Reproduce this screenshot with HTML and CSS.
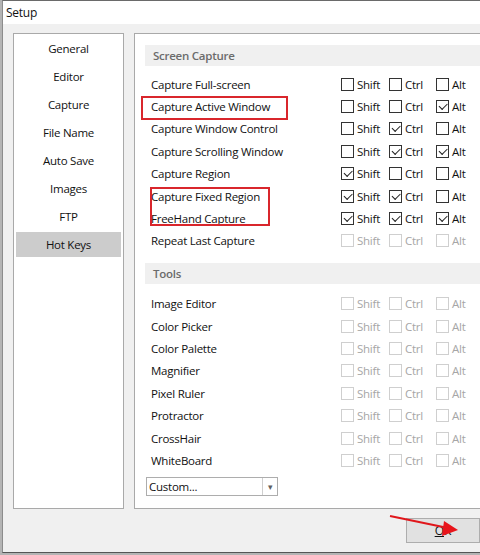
FILE: index.html
```html
<!DOCTYPE html>
<html lang="en">
<head>
    <meta charset="UTF-8">
    <title>Setup</title>
    <link rel="stylesheet" href="styles.css">
</head>
<body>
    <div class="window">
        <div class="titlebar">Setup</div>
        <div class="client">
            <div class="main">
                <ul class="nav">
                    <li>General</li>
                    <li>Editor</li>
                    <li>Capture</li>
                    <li>File Name</li>
                    <li>Auto Save</li>
                    <li>Images</li>
                    <li>FTP</li>
                    <li class="active">Hot Keys</li>
                </ul>

                <div class="panel">
                    <div class="section-head">Screen Capture</div>
                    <div class="rows first">
                        <div class="row"><span class="label">Capture Full-screen</span>
                            <span class="key shift"><i class="box"></i>Shift</span><span class="key ctrl"><i class="box"></i>Ctrl</span><span class="key"><i class="box"></i>Alt</span></div>
                        <div class="row"><span class="label">Capture Active Window</span>
                            <span class="key shift"><i class="box"></i>Shift</span><span class="key ctrl"><i class="box"></i>Ctrl</span><span class="key"><i class="box on"></i>Alt</span></div>
                        <div class="row"><span class="label">Capture Window Control</span>
                            <span class="key shift"><i class="box"></i>Shift</span><span class="key ctrl"><i class="box on"></i>Ctrl</span><span class="key"><i class="box"></i>Alt</span></div>
                        <div class="row"><span class="label">Capture Scrolling Window</span>
                            <span class="key shift"><i class="box"></i>Shift</span><span class="key ctrl"><i class="box on"></i>Ctrl</span><span class="key"><i class="box on"></i>Alt</span></div>
                        <div class="row"><span class="label">Capture Region</span>
                            <span class="key shift"><i class="box on"></i>Shift</span><span class="key ctrl"><i class="box"></i>Ctrl</span><span class="key"><i class="box"></i>Alt</span></div>
                        <div class="row"><span class="label">Capture Fixed Region</span>
                            <span class="key shift"><i class="box on"></i>Shift</span><span class="key ctrl"><i class="box on"></i>Ctrl</span><span class="key"><i class="box"></i>Alt</span></div>
                        <div class="row"><span class="label">FreeHand Capture</span>
                            <span class="key shift"><i class="box on"></i>Shift</span><span class="key ctrl"><i class="box on"></i>Ctrl</span><span class="key"><i class="box on"></i>Alt</span></div>
                        <div class="row off"><span class="label">Repeat Last Capture</span>
                            <span class="key shift"><i class="box"></i>Shift</span><span class="key ctrl"><i class="box"></i>Ctrl</span><span class="key"><i class="box"></i>Alt</span></div>
                    </div>

                    <div class="section-head tools">Tools</div>
                    <div class="rows second">
                        <div class="row off"><span class="label">Image Editor</span>
                            <span class="key shift"><i class="box"></i>Shift</span><span class="key ctrl"><i class="box"></i>Ctrl</span><span class="key"><i class="box"></i>Alt</span></div>
                        <div class="row off"><span class="label">Color Picker</span>
                            <span class="key shift"><i class="box"></i>Shift</span><span class="key ctrl"><i class="box"></i>Ctrl</span><span class="key"><i class="box"></i>Alt</span></div>
                        <div class="row off"><span class="label">Color Palette</span>
                            <span class="key shift"><i class="box"></i>Shift</span><span class="key ctrl"><i class="box"></i>Ctrl</span><span class="key"><i class="box"></i>Alt</span></div>
                        <div class="row off"><span class="label">Magnifier</span>
                            <span class="key shift"><i class="box"></i>Shift</span><span class="key ctrl"><i class="box"></i>Ctrl</span><span class="key"><i class="box"></i>Alt</span></div>
                        <div class="row off"><span class="label">Pixel Ruler</span>
                            <span class="key shift"><i class="box"></i>Shift</span><span class="key ctrl"><i class="box"></i>Ctrl</span><span class="key"><i class="box"></i>Alt</span></div>
                        <div class="row off"><span class="label">Protractor</span>
                            <span class="key shift"><i class="box"></i>Shift</span><span class="key ctrl"><i class="box"></i>Ctrl</span><span class="key"><i class="box"></i>Alt</span></div>
                        <div class="row off"><span class="label">CrossHair</span>
                            <span class="key shift"><i class="box"></i>Shift</span><span class="key ctrl"><i class="box"></i>Ctrl</span><span class="key"><i class="box"></i>Alt</span></div>
                        <div class="row off"><span class="label">WhiteBoard</span>
                            <span class="key shift"><i class="box"></i>Shift</span><span class="key ctrl"><i class="box"></i>Ctrl</span><span class="key"><i class="box"></i>Alt</span></div>
                    </div>

                    <div class="combo">
                        <span class="combo-text">Custom...</span>
                        <span class="combo-btn">&#9662;</span>
                    </div>
                </div>
            </div>

            <div class="buttons">
                <button class="ok"><u>O</u>K</button>
            </div>
        </div>

        <!-- red markup drawn on top of the dialog -->
        <div class="mark mark-active"></div>
        <div class="mark mark-fixed"></div>
        <svg class="arrow" width="90" height="40" viewBox="0 0 90 40">
            <line x1="10" y1="11" x2="68" y2="23" stroke="#e0161b" stroke-width="2"/>
            <polygon points="78,25 64,16 62,31" fill="#e8141a"/>
        </svg>
    </div>
</body>
</html>
```

FILE: styles.css
```css
* {
    box-sizing: border-box;
}
body {
    margin: 0;
    height: 555px;
    overflow: hidden;
    background: #b4b4b4;
    font-family: "Open Sans", "Noto Sans", sans-serif;
    font-size: 11.5px;
    letter-spacing: -0.25px;
    color: #111;
}
.window {
    position: relative;
    margin-left: 2px;
    width: 478px;
    height: 553px;
    background: #f0f0f0;
    border-top: 1px solid #6a6a6a;
    border-left: 1px solid #8c8c8c;
    border-bottom: 1px solid #555;
    display: flex;
    flex-direction: column;
    overflow: hidden;
}
.titlebar {
    height: 23px;
    line-height: 23px;
    padding-left: 3px;
    background: #fff;
    font-size: 12px;
}
.client {
    flex: 1;
    padding: 9px 0 0 10px;
    display: flex;
    flex-direction: column;
}
.main {
    display: flex;
    gap: 10px;
    height: 476px;
}
.nav {
    flex-shrink: 0;
    width: 111px;
    margin: 0;
    padding: 1px;
    list-style: none;
    background: #fff;
    border: 1px solid #a9a9a9;
}
.nav li {
    height: 28px;
    line-height: 26px;
    text-align: center;
    border: 1px solid transparent;
    background-clip: padding-box;
}
.nav li.active {
    background-color: #cccccc;
    border-bottom-width: 2px;
}
.panel {
    flex: 1;
    min-width: 0;
    background: #fff;
    border: 1px solid #a9a9a9;
    border-right: none;
    padding: 11px 0 0 10px;
}
.section-head {
    height: 21px;
    line-height: 21px;
    padding-left: 8px;
    background: #f0f0f0;
    color: #6b6b6b;
    font-weight: 600;
}
.section-head.tools {
    margin-top: 11px;
}
.rows.first {
    margin-top: 7px;
}
.rows.second {
    margin-top: 8.5px;
}
.row {
    height: 22.4px;
    display: flex;
    align-items: center;
    padding-left: 6px;
    white-space: nowrap;
}
.label {
    flex-shrink: 0;
    width: 190px;
}
.key {
    flex-shrink: 0;
    display: flex;
    align-items: center;
    gap: 3px;
    width: 46px;
}
.key.shift {
    width: 48px;
}
.key.ctrl {
    width: 47px;
}
.box {
    position: relative;
    flex-shrink: 0;
    width: 13px;
    height: 13px;
    border: 1px solid #333;
    background: #fff;
}
.box.on::after {
    content: "";
    position: absolute;
    left: 2px;
    top: 2px;
    width: 7px;
    height: 3.5px;
    border-left: 1px solid #222;
    border-bottom: 1px solid #222;
    transform: rotate(-45deg);
}
.row.off .key {
    color: #a6a6a6;
}
.row.off .box {
    border-color: #cfcfcf;
}
.combo {
    margin-top: 5px;
    margin-left: 1px;
    width: 132px;
    height: 19px;
    display: flex;
    border: 1px solid #adadad;
    background: #fff;
}
.combo-text {
    flex: 1;
    line-height: 17px;
    padding-left: 2px;
}
.combo-btn {
    width: 15px;
    border-left: 1px solid #cfcfcf;
    text-align: center;
    line-height: 17px;
    font-size: 9px;
    color: #606060;
}
.buttons {
    display: flex;
    justify-content: flex-end;
    margin-top: 9px;
}
.ok {
    width: 74px;
    height: 25px;
    background: #e1e1e1;
    border: 1px solid #adadad;
    font-family: inherit;
    font-size: 12px;
    color: #111;
}
.mark {
    position: absolute;
    border: 2px solid #d9262c;
}
.mark-active {
    left: 138px;
    top: 95px;
    width: 147px;
    height: 24px;
}
.mark-fixed {
    left: 147px;
    top: 186px;
    width: 120px;
    height: 39px;
}
.arrow {
    position: absolute;
    left: 377px;
    top: 504px;
}
```
